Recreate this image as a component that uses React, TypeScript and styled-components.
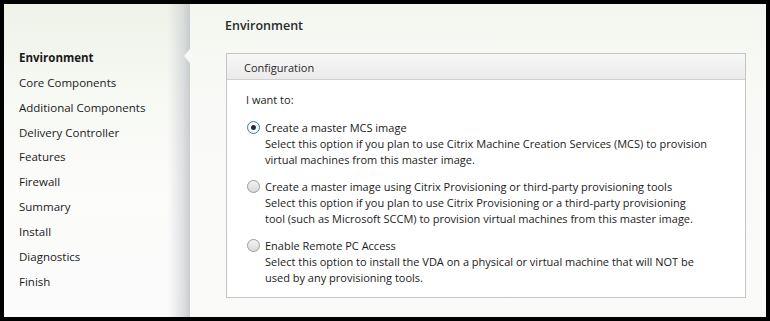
import styled, { createGlobalStyle } from "styled-components";

const GlobalStyle = createGlobalStyle`
    html, body {
        margin: 0;
        padding: 0;
        background: #000;
    }
    body {
        font-family: "Open Sans", "Noto Sans", Arial, sans-serif;
    }
`;

const steps = [
    "Environment",
    "Core Components",
    "Additional Components",
    "Delivery Controller",
    "Features",
    "Firewall",
    "Summary",
    "Install",
    "Diagnostics",
    "Finish",
];

const options = [
    {
        title: "Create a master MCS image",
        text: [
            "Select this option if you plan to use Citrix Machine Creation Services (MCS) to provision",
            "virtual machines from this master image.",
        ],
        checked: true,
    },
    {
        title: "Create a master image using Citrix Provisioning or third-party provisioning tools",
        text: [
            "Select this option if you plan to use Citrix Provisioning or a third-party provisioning",
            "tool (such as Microsoft SCCM) to provision virtual machines from this master image.",
        ],
        checked: false,
    },
    {
        title: "Enable Remote PC Access",
        text: [
            "Select this option to install the VDA on a physical or virtual machine that will NOT be",
            "used by any provisioning tools.",
        ],
        checked: false,
    },
];

export default function App() {
    return (
        <>
            <GlobalStyle />
            <Frame>
                <Window>
                    <Sidebar>
                        <StepList>
                            {steps.map((step, i) => (
                                <Step key={step} $active={i === 0}>
                                    {step}
                                </Step>
                            ))}
                        </StepList>
                        <Notch />
                    </Sidebar>

                    <Main>
                        <PageTitle>Environment</PageTitle>
                        <Card>
                            <CardHeader>Configuration</CardHeader>
                            <CardBody>
                                <Prompt>I want to:</Prompt>
                                <OptionList>
                                    {options.map((opt) => (
                                        <Option key={opt.title}>
                                            <Radio $checked={opt.checked}>
                                                {opt.checked && <RadioDot />}
                                            </Radio>
                                            <OptionText>
                                                <OptionTitle>{opt.title}</OptionTitle>
                                                {opt.text.map((line) => (
                                                    <OptionLine key={line}>{line}</OptionLine>
                                                ))}
                                            </OptionText>
                                        </Option>
                                    ))}
                                </OptionList>
                            </CardBody>
                        </Card>
                    </Main>
                </Window>
            </Frame>
        </>
    );
}

const Frame = styled.div`
    width: 770px;
    height: 321px;
    box-sizing: border-box;
    padding: 4px;
    background: #000;
`;

const Window = styled.div`
    display: flex;
    height: 100%;
    color: #1b1b1b;
    font-size: 11px;
`;

const Sidebar = styled.div`
    position: relative;
    width: 186px;
    flex-shrink: 0;
    box-sizing: border-box;
    padding-top: 41px;
    background:
        linear-gradient(to right, rgba(200, 203, 207, 0) 88%, rgba(200, 203, 207, 0.55) 96%, rgba(190, 193, 198, 0.8) 100%),
        linear-gradient(to bottom, #eef2e8 0%, #f7f9f4 30%, #fcfcfb 60%, #fbfbfb 100%);
`;

const StepList = styled.ul`
    list-style: none;
    margin: 0;
    padding: 0 0 0 15px;
`;

const Step = styled.li<{ $active: boolean }>`
    height: 24.85px;
    line-height: 25px;
    font-size: 11.5px;
    font-weight: ${({ $active }) => ($active ? 700 : 400)};
    color: #1a1a1a;
    white-space: nowrap;
`;

const Notch = styled.div`
    position: absolute;
    right: 0;
    top: 45px;
    width: 0;
    height: 0;
    border-top: 7px solid transparent;
    border-bottom: 7px solid transparent;
    border-right: 6px solid #f8f9f6;
`;

const Main = styled.div`
    flex: 1;
    display: flex;
    flex-direction: column;
    box-sizing: border-box;
    padding: 0 20px 19px 35px;
    background: linear-gradient(to bottom, #f4f7f0 0%, #f9faf7 35%, #fafaf9 100%);
`;

const PageTitle = styled.h1`
    margin: 0;
    height: 49px;
    line-height: 44px;
    font-size: 12.5px;
    font-weight: 600;
    color: #2a2a2a;
`;

const Card = styled.div`
    flex: 1;
    display: flex;
    flex-direction: column;
    background: #fff;
    border: 1px solid #c4c4c4;
    margin-left: 1px;
`;

const CardHeader = styled.div`
    height: 25px;
    line-height: 27px;
    padding-left: 17px;
    font-size: 11px;
    color: #2a2a2a;
    background: linear-gradient(to bottom, #f7f7f7, #ebebeb);
    border-bottom: 1px solid #d0d0d0;
`;

const CardBody = styled.div`
    padding: 12px 0 0 19px;
`;

const Prompt = styled.div`
    line-height: 16px;
    margin-bottom: 12px;
`;

const OptionList = styled.div`
    display: flex;
    flex-direction: column;
    gap: 11px;
`;

const Option = styled.div`
    display: flex;
    align-items: flex-start;
    gap: 5px;
`;

const Radio = styled.div<{ $checked: boolean }>`
    width: 13px;
    height: 13px;
    margin-top: 1px;
    margin-left: 1px;
    box-sizing: border-box;
    border-radius: 50%;
    flex-shrink: 0;
    display: flex;
    align-items: center;
    justify-content: center;
    border: 1px solid ${({ $checked }) => ($checked ? "#3c7fb1" : "#9a9a9a")};
    background: ${({ $checked }) =>
        $checked
            ? "radial-gradient(circle, #ffffff 40%, #dbe9f5 100%)"
            : "linear-gradient(to bottom, #f4f4f4, #d9d9d9)"};
`;

const RadioDot = styled.div`
    width: 5px;
    height: 5px;
    border-radius: 50%;
    background: #2b2b2b;
`;

const OptionText = styled.div`
    display: flex;
    flex-direction: column;
`;

const OptionTitle = styled.div`
    line-height: 16px;
    white-space: nowrap;
`;

const OptionLine = styled.div`
    line-height: 16px;
    white-space: nowrap;
`;
